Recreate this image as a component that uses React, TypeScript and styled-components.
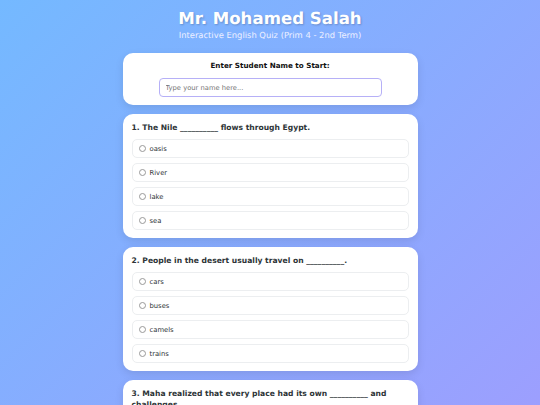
import styled, { createGlobalStyle } from 'styled-components';

const GlobalStyle = createGlobalStyle`
  html, body {
    margin: 0;
    padding: 0;
  }
  body {
    font-family: "DejaVu Sans", Verdana, sans-serif;
    text-rendering: geometricPrecision;
    background: linear-gradient(135deg, #74b9ff 0%, #a29bfe 100%);
    min-height: 100vh;
    overflow: hidden;
  }
  * {
    box-sizing: border-box;
  }
`;

const Page = styled.div`
  display: flex;
  flex-direction: column;
  align-items: center;
  padding: 8px 0 20px;
`;

const Header = styled.header`
  text-align: center;
  color: #fff;
  margin-bottom: 12px;
`;

const Title = styled.h1`
  margin: 0;
  font-size: 16.6px;
  font-weight: 700;
  line-height: 22px;
  text-shadow: 1px 1px 2px rgba(0, 0, 0, 0.2);
`;

const Subtitle = styled.p`
  margin: 0;
  font-size: 8.4px;
  line-height: 11px;
  color: #eef0ff;
`;

const Stack = styled.div`
  width: 295px;
  display: flex;
  flex-direction: column;
  gap: 9px;
`;

const Card = styled.section`
  background: #fff;
  border-radius: 10px;
  padding: 8px 9px 8px;
  box-shadow: 0 3px 8px rgba(0, 0, 0, 0.1);
`;

const NameCard = styled(Card)`
  display: flex;
  flex-direction: column;
  align-items: center;
`;

const NameLabel = styled.label`
  font-size: 7.2px;
  font-weight: 700;
  color: #111;
  line-height: 10px;
  margin-bottom: 7px;
`;

const NameInput = styled.input`
  width: 223px;
  height: 19px;
  padding: 0 6px;
  font-family: inherit;
  font-size: 6.75px;
  border: 1.5px solid #b6b0f7;
  border-radius: 4px;
  outline: none;
  color: #333;

  &::placeholder {
    color: #757575;
  }
`;

const Question = styled.p`
  margin: 0 0 6px;
  font-size: 7.6px;
  font-weight: 700;
  line-height: 11px;
  color: #2d3436;
`;

const Options = styled.div`
  display: flex;
  flex-direction: column;
  gap: 5px;
`;

const Option = styled.label`
  display: flex;
  align-items: center;
  gap: 4px;
  height: 19px;
  padding: 0 6px;
  border: 1px solid #eceef0;
  border-radius: 5px;
  font-size: 6.8px;
  color: #2d3436;
  background: #fff;
`;

const Radio = styled.span`
  width: 7px;
  height: 7px;
  border-radius: 50%;
  border: 1px solid #999;
  flex-shrink: 0;
`;

const questions = [
  {
    q: '1. The Nile __________ flows through Egypt.',
    options: ['oasis', 'River', 'lake', 'sea'],
  },
  {
    q: '2. People in the desert usually travel on __________.',
    options: ['cars', 'buses', 'camels', 'trains'],
  },
  {
    q: '3. Maha realized that every place had its own __________ and challenges.',
    options: ['beauty', 'problems', 'colours', 'people'],
  },
];

export default function App() {
  return (
    <>
      <GlobalStyle />
      <Page>
        <Header>
          <Title>Mr. Mohamed Salah</Title>
          <Subtitle>Interactive English Quiz (Prim 4 - 2nd Term)</Subtitle>
        </Header>
        <Stack>
          <NameCard>
            <NameLabel htmlFor="student">Enter Student Name to Start:</NameLabel>
            <NameInput id="student" type="text" placeholder="Type your name here..." />
          </NameCard>
          {questions.map((item) => (
            <Card key={item.q}>
              <Question>{item.q}</Question>
              <Options>
                {item.options.map((opt) => (
                  <Option key={opt}>
                    <Radio />
                    {opt}
                  </Option>
                ))}
              </Options>
            </Card>
          ))}
        </Stack>
      </Page>
    </>
  );
}
